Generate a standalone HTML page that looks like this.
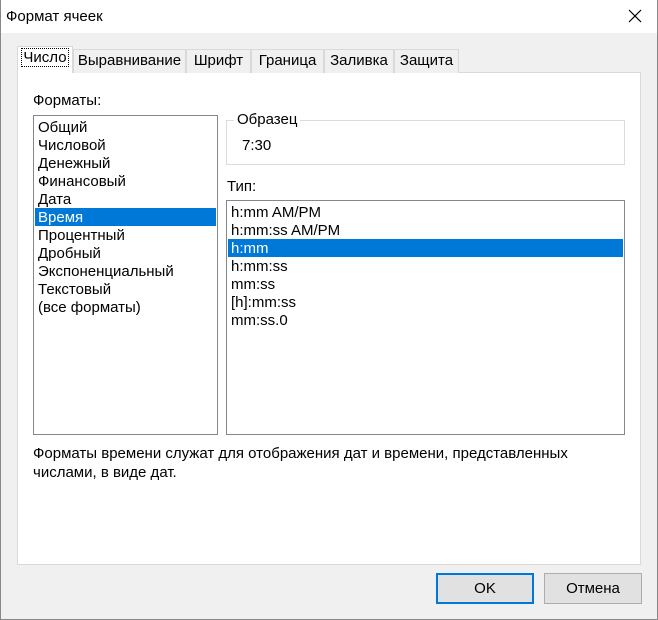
<!DOCTYPE html>
<html><head><meta charset="utf-8"><style>
*{box-sizing:border-box;margin:0;padding:0}
body{width:658px;height:620px;background:#f0f0f0;font-family:"Liberation Sans",sans-serif;font-size:15px;color:#000;position:relative;overflow:hidden}
.abs{position:absolute}
.title{left:0;top:0;width:658px;height:33px;background:#fff}
.tab{top:49px;height:24px;border:1px solid #d9d9d9;border-bottom:none;background:#f0f0f0;text-align:center;line-height:22px;font-size:15px}
.panel{left:17px;top:72px;width:624px;height:493px;background:#fff;border:1px solid #d9d9d9}
.list{background:#fff;border:1px solid #828790}
.row{height:18px;line-height:19px;padding-left:3px;white-space:nowrap}
.sel{background:#0078d7;color:#fff}
.btn{top:573px;width:98px;height:31px;background:#e1e1e1;border:1px solid #adadad;text-align:center;line-height:30px}
</style></head><body>
<div class="abs title"></div>
<div class="abs" style="left:6px;top:8px;font-size:15px">Формат ячеек</div>
<svg class="abs" style="left:628px;top:9px" width="14" height="14"><path d="M1 1L13 13M13 1L1 13" stroke="#000" stroke-width="1.2"/></svg>
<div class="abs" style="left:0;top:0;width:658px;height:620px;border:1px solid #888;border-top:none"></div>
<div class="abs panel"></div>
<div class="abs tab" style="left:17px;top:46px;width:56px;height:27px;background:#fff;border-color:#d9d9d9;z-index:2"><span style="outline:1px dotted #000;padding:0 1px">Число</span></div>
<div class="abs tab" style="left:73px;width:113px">Выравнивание</div>
<div class="abs tab" style="left:186px;width:65px">Шрифт</div>
<div class="abs tab" style="left:251px;width:73px">Граница</div>
<div class="abs tab" style="left:324px;width:70px">Заливка</div>
<div class="abs tab" style="left:394px;width:65px">Защита</div>
<div class="abs" style="left:33px;top:92px">Форматы:</div>
<div class="abs list" style="left:33px;top:115px;width:185px;height:320px;padding:2px 1px">
<div class="row">Общий</div><div class="row">Числовой</div><div class="row">Денежный</div><div class="row">Финансовый</div><div class="row">Дата</div><div class="row sel">Время</div><div class="row">Процентный</div><div class="row">Дробный</div><div class="row">Экспоненциальный</div><div class="row">Текстовый</div><div class="row">(все форматы)</div>
</div>
<div class="abs" style="left:226px;top:120px;width:399px;height:45px;border:1px solid #dcdcdc"></div>
<div class="abs" style="left:234px;top:111px;background:#fff;padding:0 3px">Образец</div>
<div class="abs" style="left:242px;top:137px">7:30</div>
<div class="abs" style="left:227px;top:178px">Тип:</div>
<div class="abs list" style="left:226px;top:200px;width:399px;height:235px;padding:2px 1px">
<div class="row">h:mm AM/PM</div><div class="row">h:mm:ss AM/PM</div><div class="row sel">h:mm</div><div class="row">h:mm:ss</div><div class="row">mm:ss</div><div class="row">[h]:mm:ss</div><div class="row">mm:ss.0</div>
</div>
<div class="abs" style="left:33px;top:444px;line-height:19px;width:600px">Форматы времени служат для отображения дат и времени, представленных<br>числами, в виде дат.</div>
<div class="abs btn" style="left:436px;border:2px solid #0078d7;line-height:28px">OK</div>
<div class="abs btn" style="left:544px">Отмена</div>
</body></html>
